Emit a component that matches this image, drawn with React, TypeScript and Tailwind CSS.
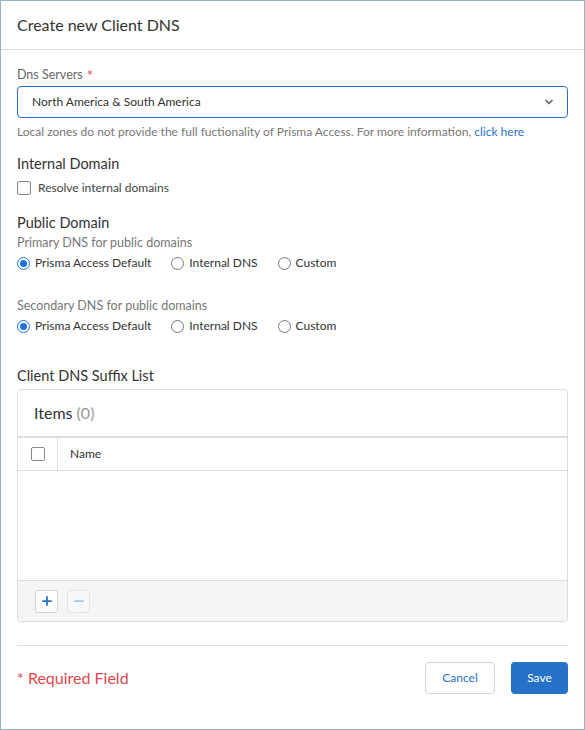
import { ChevronDown, Plus, Minus } from 'lucide-react';

function Radio({ label, checked }: { label: string; checked?: boolean }) {
  return (
    <label className="flex items-center gap-[5px] text-[12px] text-[#333]">
      <span
        className={
          checked
            ? 'w-[13px] h-[13px] rounded-full border border-[#1a73e8] flex items-center justify-center'
            : 'w-[13px] h-[13px] rounded-full border border-[#767676]'
        }
      >
        {checked && <span className="w-[7px] h-[7px] rounded-full bg-[#1a73e8]" />}
      </span>
      {label}
    </label>
  );
}

function RadioRow() {
  return (
    <div className="flex items-center gap-[20px] mt-[3px]">
      <Radio label="Prisma Access Default" checked />
      <Radio label="Internal DNS" />
      <Radio label="Custom" />
    </div>
  );
}

export default function App() {
  return (
    <div
      className="w-[585px] h-[730px] border border-[#93b4c1] bg-white flex flex-col"
      style={{ fontFamily: 'Lato, "Open Sans", sans-serif' }}
    >
      {/* Header */}
      <div className="h-[49px] border-b border-[#dcdcdc] flex items-center px-[16px] pb-[1px]">
        <h1 className="text-[16px] text-[#333]">Create new Client DNS</h1>
      </div>

      {/* Body */}
      <div className="flex-1 px-[16px] pt-[16px]">
        <div className="text-[12.5px] text-[#666] flex items-center gap-[4px] leading-[18px]">
          Dns Servers <span className="text-[#e0474c] text-[15px] leading-none">*</span>
        </div>
        <div className="mt-[2px] h-[32px] border border-[#2a6fc9] rounded-[4px] flex items-center justify-between pl-[14px] pr-[12px]">
          <span className="text-[12px] text-[#333]">North America &amp; South America</span>
          <ChevronDown className="w-[12px] h-[12px] text-[#666]" strokeWidth={3.5} />
        </div>
        <p className="mt-[6px] text-[12px] text-[#777] leading-[16px]">
          Local zones do not provide the full fuctionality of Prisma Access. For more information,{' '}
          <span className="text-[#2672c8]">click here</span>
        </p>

        <h2 className="mt-[14px] text-[14.5px] text-[#333] leading-[20px]">Internal Domain</h2>
        <label className="mt-[5px] flex items-center gap-[7px] text-[12px] text-[#444]">
          <span className="w-[14px] h-[14px] border border-[#888] rounded-[2px]" />
          Resolve internal domains
        </label>

        <h2 className="mt-[16px] text-[14.5px] text-[#333] leading-[20px]">Public Domain</h2>
        <div className="mt-[2px] text-[12.5px] text-[#777] leading-[16px]">Primary DNS for public domains</div>
        <RadioRow />

        <div className="mt-[26px] text-[12.5px] text-[#777] leading-[16px]">Secondary DNS for public domains</div>
        <RadioRow />

        <h2 className="mt-[31px] text-[14.5px] text-[#333] leading-[20px]">Client DNS Suffix List</h2>
        <div className="mt-[3px] border border-[#dcdcdc] rounded-[4px] overflow-hidden">
          <div className="h-[48px] border-b-2 border-[#dedede] flex items-center px-[16px]">
            <span className="text-[16px] text-[#333]">
              Items <span className="text-[#999]">(0)</span>
            </span>
          </div>
          <div className="h-[33px] border-b border-[#dedede] flex items-center">
            <div className="w-[40px] h-full border-r border-[#dedede] flex items-center justify-center">
              <span className="w-[14px] h-[14px] border border-[#888] rounded-[2px]" />
            </div>
            <span className="pl-[12px] text-[12px] text-[#333]">Name</span>
          </div>
          <div className="h-[110px] border-b border-[#dcdcdc]" />
          <div className="h-[40px] bg-[#f4f5f5] flex items-center gap-[9px] px-[17px]">
            <button className="w-[23px] h-[23px] bg-white border border-[#d4d4d4] rounded-[3px] flex items-center justify-center">
              <Plus className="w-[14px] h-[14px] text-[#2a6fc9]" strokeWidth={3} />
            </button>
            <button className="w-[23px] h-[23px] bg-[#f7f8f8] border border-[#e4e4e4] rounded-[3px] flex items-center justify-center">
              <Minus className="w-[14px] h-[14px] text-[#a9c3e6]" strokeWidth={3} />
            </button>
          </div>
        </div>

        <div className="mt-[23px] border-t border-[#dcdcdc]" />
        <div className="mt-[16px] flex items-center justify-between">
          <span className="text-[16px] text-[#e0474c]">* Required Field</span>
          <div className="flex items-center gap-[16px]">
            <button className="w-[70px] h-[32px] border border-[#d4d4d4] rounded-[4px] text-[12px] text-[#2672c8] bg-white">
              Cancel
            </button>
            <button className="w-[57px] h-[32px] rounded-[4px] text-[12px] text-white bg-[#2672c8]">
              Save
            </button>
          </div>
        </div>
      </div>
    </div>
  );
}
